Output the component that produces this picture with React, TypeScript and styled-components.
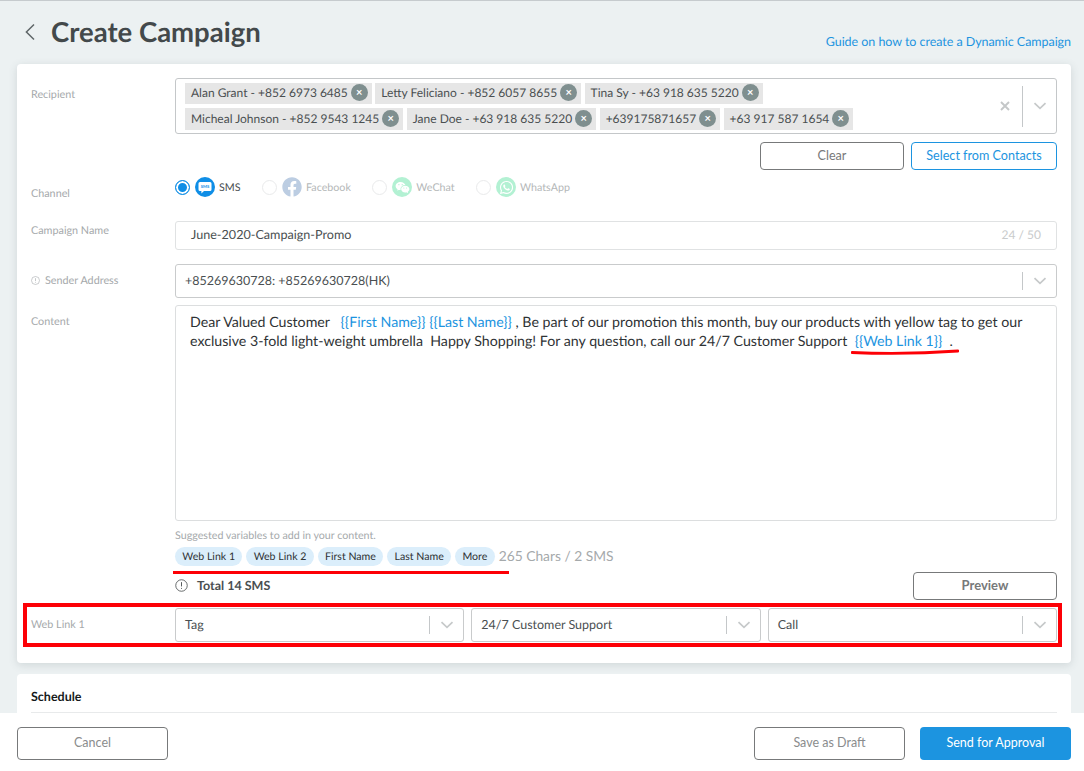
import React from "react";
import styled, { createGlobalStyle } from "styled-components";
import { FaFacebook, FaWhatsapp } from "react-icons/fa";
import { RiWechatFill } from "react-icons/ri";

const GlobalStyle = createGlobalStyle`
  html, body { margin: 0; padding: 0; }
  body {
    font-family: Lato, "Open Sans", sans-serif;
    color: #3f4547;
    text-rendering: geometricPrecision;
  }
  * { box-sizing: border-box; }
`;

const recipientRows = [
  ["Alan Grant - +852 6973 6485", "Letty Feliciano - +852 6057 8655", "Tina Sy - +63 918 635 5220"],
  ["Micheal Johnson - +852 9543 1245", "Jane Doe - +63 918 635 5220", "+639175871657", "+63 917 587 1654"],
];

const channels = [
  { name: "Facebook", color: "#bccde2", kind: "facebook" },
  { name: "WeChat", color: "#b3f1d3", kind: "wechat" },
  { name: "WhatsApp", color: "#b3f1d3", kind: "whatsapp" },
];

const variables = ["Web Link 1", "Web Link 2", "First Name", "Last Name", "More"];

const Chevron = () => (
  <svg width="14" height="8" viewBox="0 0 14 8" fill="none">
    <path d="M1.5 1.2 7 6.4l5.5-5.2" stroke="#c6c9ca" strokeWidth="1.7" />
  </svg>
);

const SelectEnd = ({ clear }: { clear?: boolean }) => (
  <SelectControls>
    {clear && (
      <ClearIcon width="10" height="10" viewBox="0 0 10 10" fill="none">
        <path d="M1 1l8 8M9 1 1 9" stroke="#c4c7c8" strokeWidth="1.9" />
      </ClearIcon>
    )}
    <Separator $tall={clear} />
    <Chevron />
  </SelectControls>
);

const InfoIcon = ({ size }: { size: number }) => (
  <svg width={size} height={size} viewBox="0 0 14 14" fill="none">
    <circle cx="7" cy="7" r="6.2" stroke="currentColor" strokeWidth="0.9" />
    <path d="M7 3.4v4.6M7 9.6v1" stroke="currentColor" strokeWidth="1" />
  </svg>
);

export default function App() {
  return (
    <Page>
      <GlobalStyle />
      <Main>
        <Header>
          <BackButton>
            <svg width="12" height="18" viewBox="0 0 12 18" fill="none">
              <path d="M10 1.5 2.4 9l7.6 7.5" stroke="#5f6668" strokeWidth="1.5" />
            </svg>
          </BackButton>
          <Title>Create Campaign</Title>
          <GuideLink>Guide on how to create a Dynamic Campaign</GuideLink>
        </Header>

        <FormCard>
          <Row>
            <Label>Recipient</Label>
            <Field>
              <RecipientBox>
                <TagRows>
                  {recipientRows.map((row, i) => (
                    <TagRow key={i}>
                      {row.map((name) => (
                        <Tag key={name}>
                          {name}
                          <TagRemove>×</TagRemove>
                        </Tag>
                      ))}
                    </TagRow>
                  ))}
                </TagRows>
                <SelectEnd clear />
              </RecipientBox>
              <RecipientActions>
                <OutlineButton $width={144}>Clear</OutlineButton>
                <OutlineButton $width={146} $primary>
                  Select from Contacts
                </OutlineButton>
              </RecipientActions>
            </Field>
          </Row>

          <ChannelRow>
            <ChannelLabel>Channel</ChannelLabel>
            <ChannelList>
              <Channel>
                <Radio $checked />
                <ChannelIcon $color="#0f8ee6">
                  <svg width="14" height="13" viewBox="0 0 14 13">
                    <path d="M2 1h10a1.5 1.5 0 0 1 1.5 1.5v6A1.5 1.5 0 0 1 12 10H6l-2.6 2.4V10H2A1.5 1.5 0 0 1 .5 8.500v-6A1.500 1.500 0 0 1 2 1z" fill="#fff" />
                    <text x="7" y="7.300" fontSize="4.200" fontWeight="700" textAnchor="middle" fill="#0f8ee6">
                      SMS
                    </text>
                  </svg>
                </ChannelIcon>
                <ChannelName $active>SMS</ChannelName>
              </Channel>
              {channels.map((c) => (
                <Channel key={c.name}>
                  <Radio />
                  {c.kind === "facebook" ? (
                    <FacebookIcon $color={c.color}>
                      <FaFacebook size={20} />
                    </FacebookIcon>
                  ) : (
                    <ChannelIcon $color={c.color}>
                      {c.kind === "wechat" ? <RiWechatFill size={15} color="#fff" /> : <FaWhatsapp size={15} color="#fff" />}
                    </ChannelIcon>
                  )}
                  <ChannelName>{c.name}</ChannelName>
                </Channel>
              ))}
            </ChannelList>
          </ChannelRow>

          <NameRow>
            <NameLabel>Campaign Name</NameLabel>
            <NameInput>
              <span>June-2020-Campaign-Promo</span>
              <Counter>24 / 50</Counter>
            </NameInput>
          </NameRow>

          <SenderRow>
            <SenderLabel>
              <InfoIcon size={9} />
              Sender Address
            </SenderLabel>
            <SelectBox>
              <span>+85269630728: +85269630728(HK)</span>
              <SelectEnd />
            </SelectBox>
          </SenderRow>

          <ContentRow>
            <Label>Content</Label>
            <Field>
              <ContentBox>
                <ContentLine>
                  <span>Dear Valued Customer&nbsp;&nbsp; </span>
                  <Variable>{"{{First Name}}"}</Variable> <Variable>{"{{Last Name}}"}</Variable>
                  <span> , Be part of our promotion this month, buy our products with yellow tag to get our</span>
                </ContentLine>
                <ContentLine>
                  <span>exclusive 3-fold light-weight umbrella&nbsp; Happy Shopping! For any question, call our 24/7 Customer Support </span>
                  <LinkMark>
                    &nbsp;<Variable>{"{{Web Link 1}}"}</Variable>&nbsp; .
                    <HandUnderline width="108" height="6" viewBox="0 0 108 6" fill="none">
                      <path d="M1 3.500C30 4.800 75 4.300 107 2" stroke="#fd0006" strokeWidth="2.800" strokeLinecap="round" />
                    </HandUnderline>
                  </LinkMark>
                </ContentLine>
              </ContentBox>
              <Hint>Suggested variables to add in your content.</Hint>
              <ChipRow>
                {variables.map((v) => (
                  <Chip key={v}>{v}</Chip>
                ))}
                <CharCount>265 Chars / 2 SMS</CharCount>
                <ChipUnderline />
              </ChipRow>
              <TotalRow>
                <Total>
                  <TotalIcon>
                    <InfoIcon size={13} />
                  </TotalIcon>
                  Total 14 SMS
                </Total>
                <OutlineButton $width={144} $bold>
                  Preview
                </OutlineButton>
              </TotalRow>
            </Field>
          </ContentRow>

          <WebLinkRow>
            <Label>Web Link 1</Label>
            <SelectGrid>
              <SelectBox>
                <span>Tag</span>
                <SelectEnd />
              </SelectBox>
              <SelectBox>
                <span>24/7 Customer Support</span>
                <SelectEnd />
              </SelectBox>
              <SelectBox>
                <span>Call</span>
                <SelectEnd />
              </SelectBox>
            </SelectGrid>
            <RedBox />
          </WebLinkRow>
        </FormCard>

        <ScheduleCard>
          <ScheduleTitle>Schedule</ScheduleTitle>
        </ScheduleCard>
      </Main>

      <Footer>
        <FooterButton>Cancel</FooterButton>
        <FooterRight>
          <FooterButton>Save as Draft</FooterButton>
          <SendButton>Send for Approval</SendButton>
        </FooterRight>
      </Footer>
    </Page>
  );
}

const Page = styled.div`
  display: flex;
  flex-direction: column;
  width: 100%;
  height: 771px;
  overflow: hidden;
  background: #ecf1f2;
  border-top: 1px solid #c6cbce;
`;

const Main = styled.div`
  flex: 1;
  min-height: 0;
  overflow: hidden;
  padding: 0 13px 0 17px;
`;

const Header = styled.div`
  display: flex;
  align-items: flex-start;
  height: 63px;
`;

const BackButton = styled.div`
  display: flex;
  width: 34px;
  margin-top: 22px;
  padding-left: 7px;
`;

const Title = styled.h1`
  margin: 14px 0 0;
  font-size: 27.500px;
  line-height: 34px;
  font-weight: 700;
  color: #43494b;
`;

const GuideLink = styled.a`
  margin: 33px 0 0 auto;
  font-size: 12.500px;
  letter-spacing: -0.05px;
  line-height: 16px;
  color: #1c94e0;
`;

const FormCard = styled.div`
  height: 599px;
  padding: 14px 14px 0;
  background: #fff;
  border-radius: 4px;
  box-shadow: 0 2px 8px rgba(60, 80, 90, 0.16);
`;

const Row = styled.div`
  display: grid;
  grid-template-columns: 144px 882px;
`;

const Label = styled.div`
  padding-top: 10px;
  font-size: 10.800px;
  line-height: 14px;
  color: #a5a9ab;
`;

const Field = styled.div`
  min-width: 0;
`;

const RecipientBox = styled.div`
  display: flex;
  justify-content: space-between;
  align-items: center;
  height: 56px;
  padding: 0 9px 0 9px;
  border: 1px solid #c4c7c9;
  border-radius: 3px;
`;

const TagRows = styled.div`
  display: flex;
  flex-direction: column;
  gap: 4px;
`;

const TagRow = styled.div`
  display: flex;
  gap: 3.500px;
  &:last-child > span {
    height: 22px;
    padding-bottom: 0;
  }
`;

const Tag = styled.span`
  display: inline-flex;
  align-items: center;
  height: 21px;
  padding: 0 4px 1px 6px;
  gap: 3px;
  background: #e6e6e6;
  font-size: 12px;
  line-height: 20px;
  color: #4a4f51;
  white-space: nowrap;
`;

const TagRemove = styled.span`
  display: inline-flex;
  align-items: center;
  justify-content: center;
  width: 17px;
  height: 17px;
  border-radius: 50%;
  background: #7f8f8f;
  color: #fff;
  font-size: 11px;
  font-weight: 700;
  line-height: 1;
`;

const SelectControls = styled.div`
  display: flex;
  align-items: center;
  gap: 10px;
  flex-shrink: 0;
`;

const ClearIcon = styled.svg`
  margin-right: 2px;
`;

const Separator = styled.i<{ $tall?: boolean }>`
  display: block;
  width: 1px;
  height: ${({ $tall }) => ($tall ? "41px" : "18px")};
  background: #c4c7c9;
`;

const RecipientActions = styled.div`
  display: flex;
  justify-content: flex-end;
  gap: 7px;
  margin-top: 8px;
`;

const OutlineButton = styled.button<{ $width: number; $primary?: boolean; $bold?: boolean }>`
  width: ${({ $width }) => $width}px;
  height: 28px;
  padding: 0 0 2px;
  border: 1px solid ${({ $primary }) => ($primary ? "#1c94e0" : "#77797a")};
  border-radius: 4px;
  background: #fff;
  font-family: inherit;
  font-size: ${({ $bold }) => ($bold ? "13px" : "12.600px")};
  font-weight: ${({ $bold }) => ($bold ? 700 : 400)};
  color: ${({ $primary }) => ($primary ? "#1c94e0" : "#77797a")};
`;

const ChannelRow = styled(Row)`
  grid-template-rows: 20px;
  margin-top: 7px;
  height: 20px;
`;

const ChannelLabel = styled(Label)`
  padding-top: 10px;
`;

const ChannelList = styled.div`
  display: flex;
  gap: 21.500px;
`;

const Channel = styled.div`
  display: flex;
  align-items: center;
`;

const Radio = styled.span<{ $checked?: boolean }>`
  display: block;
  width: 15px;
  height: 15px;
  margin-right: 5px;
  border-radius: 50%;
  border: 1px solid ${({ $checked }) => ($checked ? "#0f8ee6" : "#e9eaeb")};
  background: ${({ $checked }) => ($checked ? "#0f8ee6" : "#fff")};
  box-shadow: ${({ $checked }) => ($checked ? "inset 0 0 0 2px #fff" : "none")};
`;

const ChannelIcon = styled.span<{ $color: string }>`
  display: flex;
  align-items: center;
  justify-content: center;
  width: 20px;
  height: 20px;
  border-radius: 50%;
  background: ${({ $color }) => $color};
`;

const FacebookIcon = styled.span<{ $color: string }>`
  display: flex;
  color: ${({ $color }) => $color};
`;

const ChannelName = styled.span<{ $active?: boolean }>`
  margin-left: 4px;
  font-size: 10.700px;
  color: ${({ $active }) => ($active ? "#4a4f51" : "#b4b7b8")};
`;

const NameRow = styled(Row)`
  margin-top: 24px;
`;

const NameLabel = styled(Label)`
  padding-top: 3px;
`;

const NameInput = styled.div`
  display: flex;
  justify-content: space-between;
  align-items: center;
  height: 29px;
  padding: 0 15px 3px;
  border: 1px solid #e0e2e3;
  border-radius: 3px;
  font-size: 12.600px;
  color: #4a4f51;
`;

const Counter = styled.span`
  font-size: 12px;
  color: #c9cbcc;
`;

const SenderRow = styled(Row)`
  margin-top: 14px;
`;

const SenderLabel = styled(Label)`
  display: flex;
  align-items: flex-start;
  gap: 5px;
  & svg {
    margin-top: 2px;
  }
`;

const SelectBox = styled.div`
  display: flex;
  justify-content: space-between;
  align-items: center;
  height: 34px;
  padding: 0 9px;
  border: 1px solid #c9cbcc;
  border-radius: 3px;
  font-size: 12.500px;
  color: #4a4f51;
  & > span {
    padding-bottom: 2px;
  }
`;

const ContentRow = styled(Row)`
  margin-top: 7px;
`;

const ContentBox = styled.div`
  height: 216px;
  padding: 7px 14px;
  border: 1px solid #dcdedf;
  border-radius: 3px;
  font-size: 14.200px;
  line-height: 19px;
  color: #2f3335;
`;

const ContentLine = styled.div`
  white-space: nowrap;
`;

const Variable = styled.span`
  color: #1c94e0;
`;

const LinkMark = styled.span`
  position: relative;
  display: inline-block;
`;

const HandUnderline = styled.svg`
  position: absolute;
  left: 0;
  bottom: -4px;
`;

const Hint = styled.div`
  margin-top: 8px;
  font-size: 10.700px;
  line-height: 14px;
  color: #a5a9ab;
`;

const ChipRow = styled.div`
  position: relative;
  display: flex;
  align-items: center;
  gap: 4px;
  height: 20px;
  margin-top: 3px;
`;

const Chip = styled.span`
  display: flex;
  align-items: center;
  height: 19px;
  padding: 1px 7.300px 0;
  border-radius: 10px;
  background: #dbeefb;
  font-size: 10.600px;
  color: #2f3335;
`;

const CharCount = styled.span`
  padding-bottom: 1px;
  font-size: 13.800px;
  color: #a5a9ab;
`;

const ChipUnderline = styled.i`
  position: absolute;
  left: -2px;
  top: 25px;
  width: 336px;
  height: 3px;
  background: #fd0006;
`;

const TotalRow = styled.div`
  display: flex;
  justify-content: space-between;
  align-items: center;
  margin-top: 6px;
`;

const Total = styled.div`
  display: flex;
  align-items: center;
  gap: 9px;
  padding-bottom: 2px;
  font-size: 12.500px;
  font-weight: 700;
  color: #4a4f51;
`;

const TotalIcon = styled.span`
  display: flex;
  color: #4a4f51;
`;

const WebLinkRow = styled(Row)`
  position: relative;
  margin-top: 8px;
`;

const SelectGrid = styled.div`
  display: grid;
  grid-template-columns: repeat(3, 1fr);
  gap: 7px;
`;

const RedBox = styled.i`
  position: absolute;
  left: -8px;
  right: -5px;
  top: -5px;
  bottom: -5px;
  border: 4px solid #fd0006;
  pointer-events: none;
`;

const ScheduleCard = styled.div`
  margin-top: 11px;
  height: 60px;
  padding: 15px 14px 0;
  background: #fff;
  border-radius: 4px 4px 0 0;
`;

const ScheduleTitle = styled.div`
  padding-bottom: 7px;
  border-bottom: 1px solid #e8eaeb;
  font-size: 12.500px;
  line-height: 16px;
  font-weight: 700;
  color: #16191a;
`;

const Footer = styled.div`
  display: flex;
  justify-content: space-between;
  align-items: flex-start;
  height: 58px;
  padding: 14px 13px 0 17px;
  background: #fff;
`;

const FooterRight = styled.div`
  display: flex;
  gap: 15px;
`;

const FooterButton = styled.button`
  width: 151px;
  height: 33px;
  padding: 0 0 2px;
  border: 1px solid #77797a;
  border-radius: 4px;
  background: #fff;
  font-family: inherit;
  font-size: 12.500px;
  color: #8a8c8d;
`;

const SendButton = styled.button`
  width: 151px;
  height: 33px;
  padding: 0 0 2px;
  border: none;
  border-radius: 4px;
  background: #1c94e0;
  font-family: inherit;
  font-size: 12.500px;
  color: #fff;
`;
